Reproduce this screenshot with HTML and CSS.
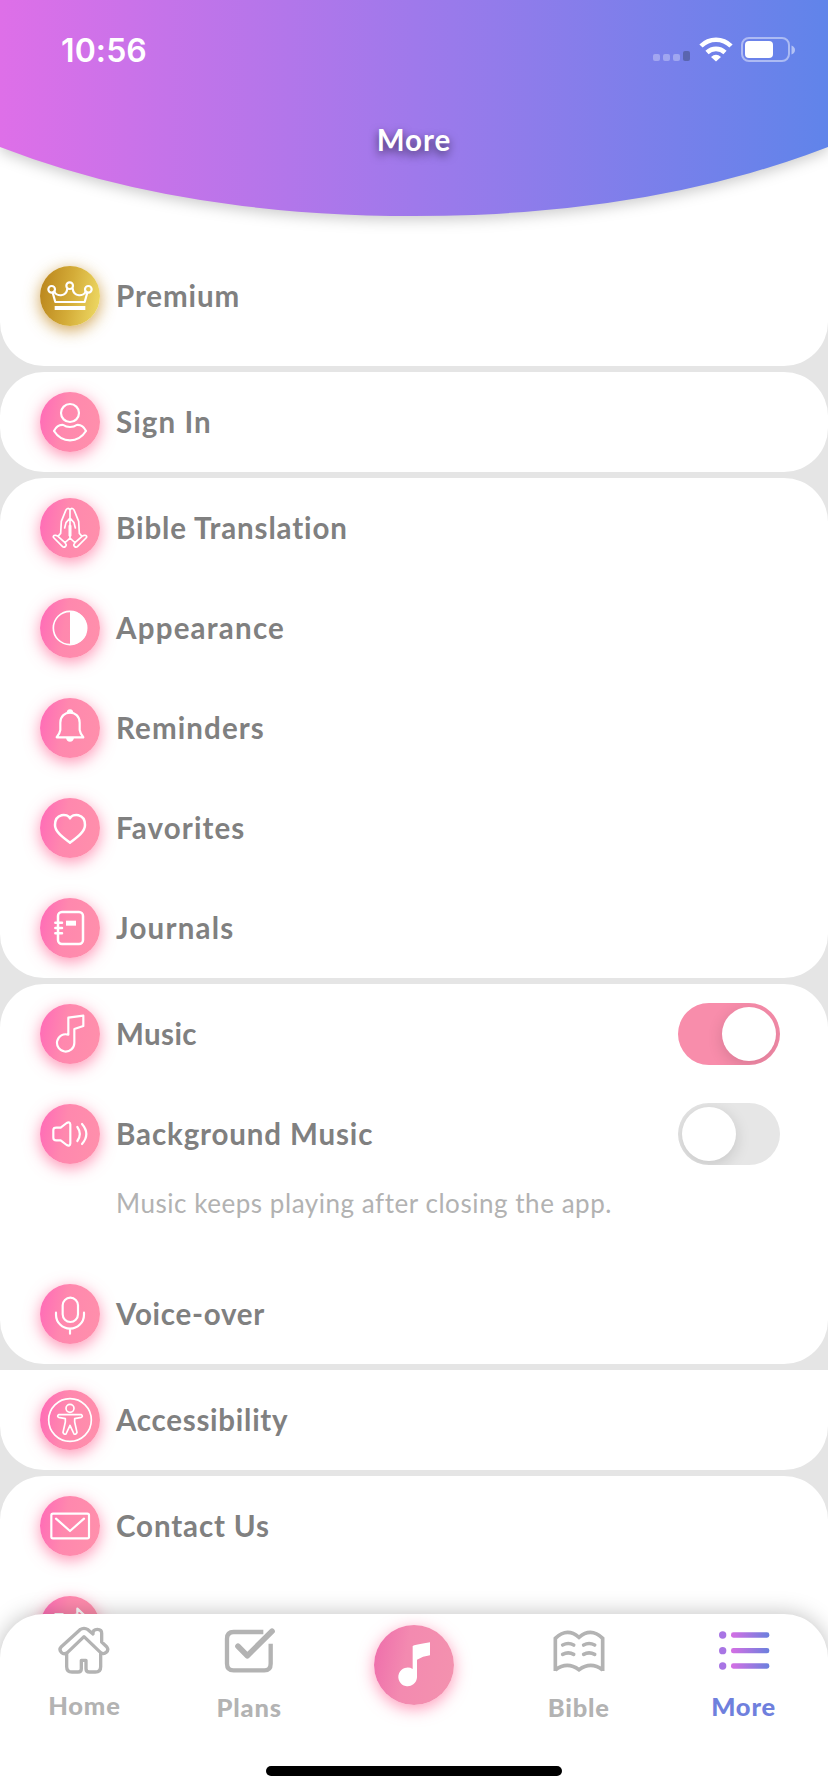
FILE: index.html
```
<!DOCTYPE html>
<html lang="en">
<head>
<meta charset="utf-8">
<title>More</title>
<link rel="stylesheet" href="styles.css">
</head>
<body>
<div class="screen">
  <header class="header">
    <svg class="header-bg" viewBox="0 0 828 240">
      <defs>
        <linearGradient id="sky" x1="0" x2="1"><stop offset="0" stop-color="#de6fe8"/><stop offset=".5" stop-color="#9f79eb"/><stop offset="1" stop-color="#6084ea"/></linearGradient>
      </defs>
      <path fill="url(#sky)" d="M0 0H828V147Q650 216 414 216T0 147Z"/>
    </svg>
    <div class="status">
      <span class="clock">10:56</span>
      <svg class="status-icons" viewBox="0 0 144 28">
        <g fill="#fff" fill-opacity=".3"><rect x="1" y="16" width="7" height="7" rx="2"/><rect x="11" y="16" width="7" height="7" rx="2"/><rect x="21" y="16" width="7" height="7" rx="2"/></g>
        <rect x="31" y="13" width="7" height="10" rx="2" fill="#5a65b0"/>
        <g fill="none" stroke="#fff" stroke-width="4.600"><path d="M49 8A21 21 0 0 1 79 8"/><path d="M55 14.500A13 13 0 0 1 73 14.500"/></g>
        <path fill="#fff" d="M64 23.500l-5-4.500q5-4.500 10 0z"/>
        <rect x="90" y="0" width="47" height="23" rx="7" fill="none" stroke="#fff" stroke-opacity=".45" stroke-width="2"/>
        <rect x="93" y="3" width="28" height="17" rx="4" fill="#fff"/>
        <path fill="#fff" fill-opacity=".5" d="M139.500 7.500q3.500 1.500 3.500 4.500t-3.500 4.500z"/>
      </svg>
    </div>
    <h1 class="title">More</h1>
  </header>

  <main class="list">
    <section class="card card-premium">
      <div class="row"><span class="badge gold"><svg viewBox="0 0 180 180"><circle cx="35" cy="70" r="10"/><circle cx="89" cy="59" r="10"/><circle cx="145" cy="70" r="10"/><path d="M38 80L46 108H134L142 80M43 76C48 92 79 94 82 68M98 68C101 94 132 92 137 76"/><path class="solid" d="M44 120H136V132H44Z"/></svg></span><span class="label">Premium</span></div>
    </section>
    <section class="card">
      <div class="row"><span class="badge"><svg viewBox="0 0 180 180"><circle cx="90" cy="63" r="27"/><path d="M42 117Q52 97 70 99C80 107 100 107 110 99Q128 97 138 117Q120 145 90 145T42 117Z"/></svg></span><span class="label wide">Sign In</span></div>
    </section>
    <section class="card">
      <div class="row"><span class="badge"><svg class="fine" viewBox="0 0 180 180"><path d="M90 36C86 29 80 30 77 38L64 70L62 106L54 115L47 112C40 111 38 116 42 120L67 145C73 151 82 143 77 137L75 134Q80 130 90 120V36C94 29 100 30 103 38L116 70L118 106L126 115L133 112C140 111 142 116 138 120L113 145C107 151 98 143 103 137L105 134Q100 130 90 120M54 115L75 134M126 115L105 134M90 60L78 74L74 90M90 60L102 74L106 90"/><path stroke-width="9" d="M90 84V112"/></svg></span><span class="label">Bible Translation</span></div>
      <div class="row"><span class="badge"><svg class="fine" viewBox="0 0 180 180"><circle cx="90" cy="90" r="50"/><path class="solid" d="M90 39A51 51 0 0 1 90 141Z"/></svg></span><span class="label wider">Appearance</span></div>
      <div class="row"><span class="badge"><svg viewBox="0 0 180 180"><path d="M61 96V74C61 34 119 34 119 74V96Q121 108 130 118H50Q59 108 61 96Z"/><path class="solid" d="M80 46Q80 34 90 34T100 46ZM78 119H102Q100 131 90 131T78 119Z"/></svg></span><span class="label wide">Reminders</span></div>
      <div class="row"><span class="badge"><svg class="bold" viewBox="0 0 180 180"><path d="M90 61C83 45 45 45 45 81C45 102 69 118 90 134C111 118 135 102 135 81C135 45 97 45 90 61Z"/></svg></span><span class="label wide">Favorites</span></div>
      <div class="row"><span class="badge"><svg class="bold" viewBox="0 0 180 180"><rect x="54" y="42" width="75" height="96" rx="12"/><path d="M46 74H66M46 90H66M46 106H66"/><path class="solid" d="M78 68H108V83H78Z"/></svg></span><span class="label wider">Journals</span></div>
    </section>
    <section class="card">
      <div class="row"><span class="badge"><svg viewBox="0 0 180 180"><path d="M85 92V41L130 35V66L103 75V117A26 26 0 1 1 85 92Z"/></svg></span><span class="label narrow">Music</span><span class="switch on"><i></i></span></div>
      <div class="row"><span class="badge"><svg viewBox="0 0 180 180"><path d="M40 78Q40 71 49 71H62L80 57Q90 52 91 62V118Q90 128 80 123L62 109H49Q40 109 40 101ZM112 69Q127 90 112 111M126 60Q152 90 126 120"/></svg></span><span class="label">Background Music</span><span class="switch"><i></i></span></div>
      <p class="note">Music keeps playing after closing the app.</p>
      <div class="row"><span class="badge"><svg viewBox="0 0 180 180"><rect x="68" y="41" width="46" height="73" rx="23"/><path d="M48 86V92A42 42 0 0 0 132 92V86M90 134V149"/></svg></span><span class="label snug">Voice-over</span></div>
    </section>
    <section class="card card-flat">
      <div class="row"><span class="badge"><svg class="fine" viewBox="0 0 180 180"><circle cx="90" cy="90" r="64" stroke-width="5"/><circle cx="90" cy="55" r="12"/><path d="M56 74H124Q130 79 124 82L104 86V96L111 127Q108 135 102 132L90 106L78 132Q72 135 69 127L76 96V86L56 82Q50 79 56 74Z"/></svg></span><span class="label snug">Accessibility</span></div>
    </section>
    <section class="card card-last">
      <div class="row"><span class="badge"><svg viewBox="0 0 180 180"><rect x="34" y="53" width="113" height="74" rx="5"/><path d="M48 68L90 105L132 68"/></svg></span><span class="label">Contact Us</span></div>
      <div class="row"><span class="badge"><svg viewBox="0 0 180 180"><path d="M68 54H46V135H132V110M112 38L142 66L112 94V78Q86 76 70 100Q76 60 112 55Z"/></svg></span><span class="label share">Share the App</span></div>
    </section>
  </main>

  <nav class="tabs">
    <a class="tab tab-home"><svg viewBox="0 0 156 150" fill="none" stroke="#b3b3b3" stroke-width="10" stroke-linejoin="round" stroke-linecap="round"><path d="M26 83V122Q26 138 42 138H60Q70 138 70 128V103H84V128Q84 138 94 138H112Q128 138 128 122V83"/><path d="M66 11Q78 3 90 11L105 24Q104 10 118 10T131 24V48L146 62Q153 72 145 79T128 80L78 32L28 80Q18 87 10 79T10 62Z"/></svg><span>Home</span></a>
    <a class="tab tab-plans"><svg viewBox="0 0 156 150" fill="none" stroke="#b3b3b3" stroke-width="13" stroke-linecap="butt"><path d="M121 15H32Q12 15 12 35V110Q12 130 32 130H124Q143 130 143 110V50"/><path stroke-width="17" stroke-linejoin="round" stroke-linecap="round" d="M45 58L73 86L147 13"/></svg><span>Plans</span></a>
    <a class="play"><svg viewBox="0 0 240 240"><path fill="#fff" d="M116 63Q120 60 168 52V91Q146 94 129 104V157A28 28 0 1 1 116 132Z"/></svg></a>
    <a class="tab tab-bible"><svg viewBox="0 0 156 150" fill="none" stroke="#b3b3b3" stroke-width="11"><path d="M7 132V34Q42 0 78 31Q114 0 149 34V132M7 129Q42 102 78 128Q114 102 149 129"/><path stroke-width="11" stroke-linecap="round" d="M29 54Q46 45 62 54M29 82Q46 73 62 82M92 54Q108 45 125 54M92 82Q108 73 125 82"/></svg><span>Bible</span></a>
    <a class="tab tab-more active"><svg viewBox="0 0 156 150"><defs><linearGradient id="mix" x1="0" x2="1"><stop offset="0" stop-color="#d66fe4"/><stop offset="1" stop-color="#6a80dd"/></linearGradient></defs><g fill="url(#mix)"><circle cx="14" cy="24" r="11" fill="#a875e4"/><circle cx="14" cy="71" r="11" fill="#a875e4"/><circle cx="14" cy="117" r="11" fill="#a875e4"/><rect x="39" y="16" width="115" height="16" rx="7"/><rect x="39" y="63" width="115" height="16" rx="7"/><rect x="39" y="109" width="115" height="16" rx="7"/></g></svg><span>More</span></a>
    <div class="home-indicator"></div>
  </nav>
</div>
</body>
</html>
```
FILE: styles.css
```
* { box-sizing: border-box; }
body { margin: 0; font-family: Lato, "Open Sans", sans-serif; }
.screen { position: relative; width: 828px; height: 1792px; overflow: hidden; background: #e5e5e5; display: flex; flex-direction: column; }

.header { height: 240px; flex: none; background: #fff; position: relative; display: flex; flex-direction: column; align-items: center; }
.header-bg { position: absolute; inset: 0; width: 828px; height: 240px; overflow: visible; filter: drop-shadow(0 4px 7px rgba(0,0,0,.2)); }
.status { position: relative; align-self: stretch; height: 102px; padding: 2px 32px 0 61px; display: flex; justify-content: space-between; align-items: center; color: #fff; }
.clock { font: 600 32px/40px Inter, sans-serif; letter-spacing: .1px; margin-bottom: 2px; }
.status-icons { width: 144px; height: 28px; overflow: visible; }
.title { position: relative; margin: 18px 0 0; color: #fff; font-size: 29.500px; line-height: 40px; font-weight: 700; letter-spacing: 1px; text-shadow: 0 4px 10px rgba(0,0,0,.6); }

.list { flex: none; display: flex; flex-direction: column; gap: 6px; }
.card { background: #fff; border-radius: 44px; }
.card-premium { height: 126px; padding-top: 6px; border-radius: 0 0 44px 44px; }
.card-flat { border-radius: 0 0 44px 44px; }
.card-last { height: 400px; }
.row { height: 100px; padding: 0 48px 0 40px; display: flex; align-items: center; }
.badge { width: 60px; height: 60px; flex: none; border-radius: 50%; background: linear-gradient(100deg, #ff69b8 0, #ff88ae 42%, #ff90ab 100%); box-shadow: 0 4px 16px rgba(255,95,145,.68); }
.badge.gold { background: linear-gradient(100deg, #b8821a, #d4ac38 50%, #f0dd68); box-shadow: 0 4px 16px rgba(195,135,30,.75); }
.badge svg { display: block; width: 60px; height: 60px; fill: none; stroke: #fff; stroke-width: 6.500; stroke-linecap: round; stroke-linejoin: round; }
.badge svg.fine { stroke-width: 5; }
.badge svg.bold { stroke-width: 7.500; }
.badge .solid { fill: #fff; stroke: none; }
.label { margin-left: 16px; font-size: 29.500px; line-height: 40px; font-weight: 700; letter-spacing: .87px; color: #808080; white-space: nowrap; }
.label.wide { letter-spacing: 1.100px; }
.label.wider { letter-spacing: 1.220px; }
.label.snug { letter-spacing: .74px; }
.label.narrow { letter-spacing: .4px; }
.label.share { margin-bottom: 1px; }
.note { margin: 0; height: 80px; padding-left: 116px; font-size: 26px; line-height: 38px; letter-spacing: .54px; color: #b2b2b2; white-space: nowrap; }
.switch { margin-left: auto; width: 102px; height: 62px; padding: 4px; border-radius: 31px; background: #e6e6e6; display: flex; overflow: hidden; }
.switch.on { background: #f88dab; justify-content: flex-end; }
.switch i { width: 54px; height: 54px; border-radius: 50%; background: #fff; box-shadow: 0 4px 16px rgba(0,0,0,.14); }

.tabs { position: absolute; left: 0; bottom: 0; width: 828px; height: 178px; border-radius: 44px 44px 0 0; background: #fff; box-shadow: 0 0 22px rgba(0,0,0,.26); display: grid; grid-template: 141px 10px / repeat(5, 1fr); padding: 11px 2px 0; justify-items: center; align-items: start; }
.tab { display: flex; flex-direction: column; align-items: center; color: #b3b3b3; font-size: 25.500px; line-height: 32px; font-weight: 900; letter-spacing: .8px; }
.tab svg { width: 52px; height: 50px; margin: 2px 0 13px; }
.tab-home svg { margin: 1px 0 13px; }
.tab-plans svg, .tab-bible svg { margin-bottom: 14px; }
.active { color: #6f80dd; }
.play { width: 80px; height: 80px; border-radius: 50%; background: linear-gradient(100deg, #ee6cab, #f38ab0 40%, #f392ae); box-shadow: 0 4px 16px rgba(255,95,145,.62); }
.play svg { display: block; width: 80px; height: 80px; }
.home-indicator { grid-column: 1 / -1; justify-self: center; width: 296px; height: 10px; border-radius: 5px; background: #000; }
```
